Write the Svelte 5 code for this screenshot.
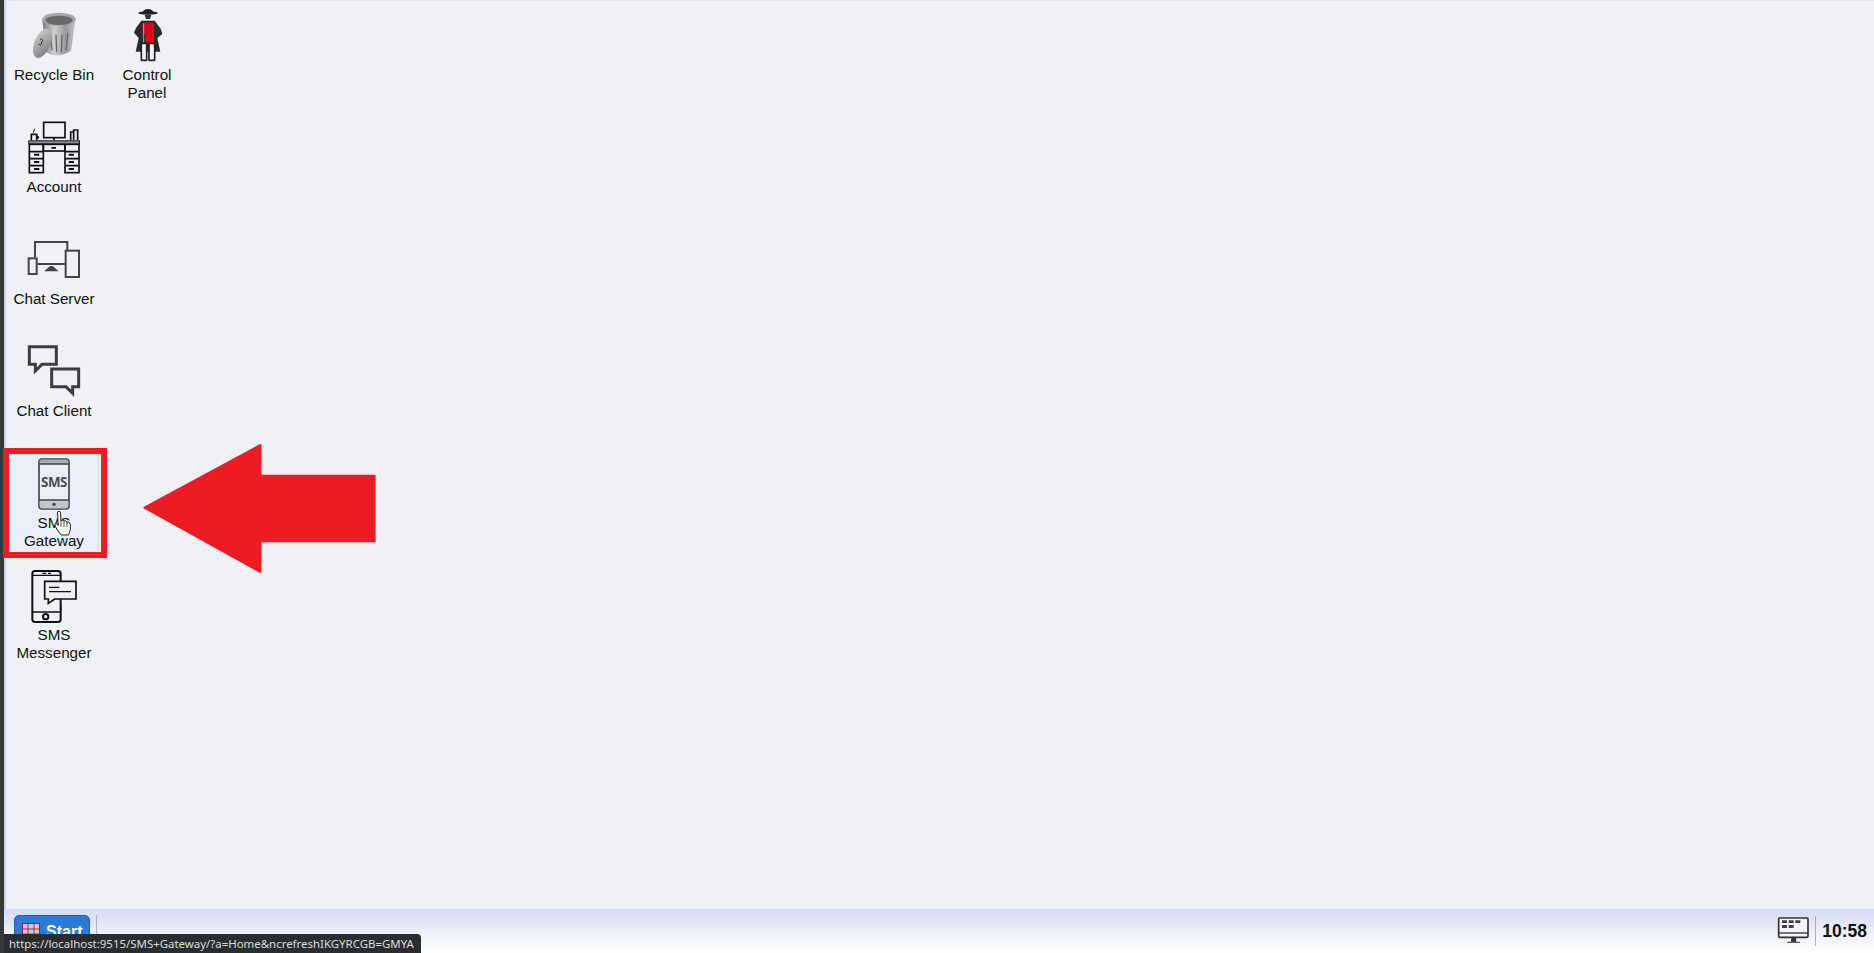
<script lang="ts">
	// Desktop shortcuts, in column order; col 2 holds only Control Panel
	const leftIcons = [
		{ id: 'recycle', label: 'Recycle Bin', box: '81 30 162 162' },
		{ id: 'control', label: 'Control Panel', box: '360 30 162 162' },
		{ id: 'account', label: 'Account', box: '81 366 162 162' },
		{ id: 'server', label: 'Chat Server', box: '81 42 162 162' },
		{ id: 'client', label: 'Chat Client', box: '81 378 162 162' },
		{ id: 'gateway', label: 'SMS Gateway', box: '81 54 162 162', active: true },
		{ id: 'messenger', label: 'SMS Messenger', box: '81 390 162 162' }
	];
	const statusUrl = 'https://localhost:9515/SMS+Gateway/?a=Home&ncrefreshIKGYRCGB=GMYA';
</script>

<div class="screen">
	<main class="desktop">
		{#each leftIcons as item}
			<button class="tile {item.id}" class:active={item.active} type="button">
				<svg class="tile__icon" viewBox={item.box} aria-hidden="true">
					{#if item.id === 'recycle'}
						<defs>
							<linearGradient id="can" x1="0" x2="1" y1="0" y2="0">
								<stop offset="0" stop-color="#777" />
								<stop offset="0.35" stop-color="#cfcfcf" />
								<stop offset="0.7" stop-color="#999" />
								<stop offset="1" stop-color="#c8c8c8" />
							</linearGradient>
							<linearGradient id="lid" x1="0" x2="1" y1="0" y2="1">
								<stop offset="0" stop-color="#d2d2d2" />
								<stop offset="1" stop-color="#777" />
							</linearGradient>
						</defs>
						<path d="M127 60 Q176 30 227 56 L213 152 Q172 178 138 156 Z" fill="url(#can)" />
						<ellipse cx="177" cy="58" rx="50" ry="20" fill="#a8a8a8" />
						<ellipse cx="177" cy="61" rx="41" ry="14" fill="#6a6a6a" />
						<path d="M150 100 L156 150 M168 104 L170 156 M186 104 L184 156 M204 98 L198 150" stroke="#666" stroke-width="4" fill="none" />
						<ellipse cx="127" cy="130" rx="24" ry="46" transform="rotate(22 127 130)" fill="url(#lid)" />
						<path d="M120 116 L128 120 L122 136 L116 132" stroke="#333" stroke-width="3" fill="none" />
					{:else if item.id === 'control'}
						<ellipse cx="444" cy="39" rx="29" ry="5" fill="#222" />
						<path d="M428 38 Q430 27 444 27 Q458 27 460 38 Z" fill="#222" />
						<path d="M434 44 H454 L450 57 H438 Z" fill="#333" />
						<path d="M424 62 H464 L482 86 L487 102 L472 114 L481 155 H407 L416 114 L402 98 L408 84 Z" fill="#2b2b2b" />
						<path d="M428 68 H462 V128 H436 V102 H428 Z" fill="#e2001a" />
						<path d="M431 70 V128" stroke="#dfe3ea" stroke-width="2" />
						<path d="M424 130 H440 V181 H424 Z M447 130 H464 V181 H447 Z" fill="#f3f4f7" stroke="#222" stroke-width="5" stroke-linejoin="round" />
					{:else if item.id === 'account'}
						<g fill="none" stroke="#111" stroke-width="5">
							<rect x="131" y="367" width="64" height="46" />
							<path d="M162 413 V421 M94 420 V403 H110 V420 M110 407 Q120 412 110 417 M212 420 V396 H221 V420 M221 420 V390 H233 V420" />
							<path d="M100 398 L104 386" stroke-width="3" />
							<rect x="88" y="433" width="42" height="85" />
							<rect x="195" y="433" width="42" height="85" />
							<rect x="130" y="433" width="65" height="20" />
							<path d="M88 455 H130 M88 476 H130 M88 497 H130 M195 455 H237 M195 476 H237 M195 497 H237" />
						</g>
						<rect x="86.5" y="422.5" width="152" height="9" fill="#8f9094" stroke="#111" stroke-width="3" />
						<path d="M102 461 h16 v6 h-16 Z M102 483 h16 v6 h-16 Z M102 504 h16 v6 h-16 Z M206 461 h16 v6 h-16 Z M206 483 h16 v6 h-16 Z M206 504 h16 v6 h-16 Z M154 441 h14 v5 h-14 Z" fill="#111" />
					{:else if item.id === 'server'}
						<g fill="none" stroke="#444" stroke-width="6">
							<path d="M105 112 V66 H202 V92 M112 132 H196" />
							<rect x="197" y="92" width="40" height="79" />
							<rect x="86" y="115" width="24" height="47" />
						</g>
						<path d="M150 138 H158 L176 154 H132 Z" fill="#444" />
					{:else if item.id === 'client'}
						<g fill="none" stroke="#3d3d3d" stroke-width="9">
							<path d="M88 380 H169 V433 H126 L106 453 V433 H88 Z" />
							<path d="M236 447 H155 V500 H198 L218 520 V500 H236 Z" />
						</g>
					{:else if item.id === 'gateway'}
						<rect x="117" y="57" width="90" height="150" rx="9" fill="#e9edf8" stroke="#444" stroke-width="5" />
						<path d="M119 60 Q119 59 126 59 H198 Q205 59 205 66 V72 H119 Z" fill="#a9acb3" />
						<path d="M119 180 H205 V198 Q205 205 198 205 H126 Q119 205 119 198 Z" fill="#c3c6cc" />
						<path d="M117 72 H207 M117 180 H207" stroke="#444" stroke-width="4" />
						<circle cx="162" cy="193" r="5" fill="#444" />
						<text class="phone-text" x="162" y="142" text-anchor="middle">SMS</text>
					{:else if item.id === 'messenger'}
						<g fill="none" stroke="#111" stroke-width="6">
							<path d="M182 424 V401 Q182 393 174 393 H105 Q97 393 97 401 V538 Q97 546 105 546 H174 Q182 546 182 538 V478" />
							<path d="M97 406 H182 M97 516 H182 M182 491 V516" stroke-width="4" />
							<circle cx="137" cy="530" r="8" />
							<path d="M134 424 H228 V477 H164 L145 490 V477 H134 Z" fill="#eff1f5" stroke-width="5" />
						</g>
						<path d="M127 400 h12 M144 400 h9" stroke="#111" stroke-width="4" />
						<path d="M147 442 H178 M147 455 H213" stroke="#111" stroke-width="4" />
					{/if}
				</svg>
				<span class="tile__label">{item.label}</span>
			</button>
		{/each}
	</main>

	<footer class="taskbar">
		<button class="start" type="button">
			<svg class="start__icon" viewBox="0 0 18 18" aria-hidden="true">
				<rect x="0.5" y="0.5" width="17" height="17" fill="#c9ccd2" stroke="#b3122c" />
				<path d="M0 6 H18 M0 11 H18 M6 0 V18 M12 0 V18" stroke="#8b3a4a" stroke-width="1" />
			</svg>
			Start
		</button>
		<span class="divider"></span>
		<div class="tray">
			<svg class="tray__screen" viewBox="115 70 96 96" aria-hidden="true">
				<rect x="120" y="79" width="88" height="58" rx="3" fill="#f4f5fa" stroke="#333" stroke-width="5" />
				<path d="M120 124 H208" stroke="#333" stroke-width="4" />
				<path d="M130 86 h15 v8 h-15 Z M150 86 h15 v8 h-15 Z M170 86 h15 v8 h-15 Z M130 100 h15 v9 h-15 Z M150 100 h15 v9 h-15 Z" fill="#444" />
				<path d="M160 137 H170 L172 149 H158 Z M146 152 H184" fill="#333" stroke="#333" stroke-width="3" />
			</svg>
			<span class="divider"></span>
			<time class="clock">10:58</time>
		</div>
	</footer>

	<!-- Tutorial annotation drawn over the desktop -->
	<div class="callout"></div>
	<svg class="arrow" viewBox="0 0 236 132" aria-hidden="true">
		<polygon points="1,64 118,1 118,32 233,32 233,98 118,98 118,129" fill="#ed1c24" stroke="#ed1c24" stroke-width="2" stroke-linejoin="round" />
	</svg>
	<svg class="cursor" viewBox="0 0 18 26" aria-hidden="true">
		<path d="M3.5 2 Q5.2 0.4 6.5 2 L7 11 Q8.6 9.4 10 11 Q12 9.8 13 12 Q15.5 11.5 16.5 14.5 Q17 20 14.5 25 H7 Q5 22 3 19.5 L0.8 15 Q1 12.8 3.2 14 L4.2 15.5 Z" fill="#fff" stroke="#222" stroke-width="1" />
		<path d="M7 11 V17 M10 11 V17 M13 12 V17" stroke="#222" stroke-width="0.8" />
	</svg>
	<div class="status-url">{statusUrl}</div>
</div>

<style>
	:global(body) {
		margin: 0;
		overflow: hidden;
	}

	.screen {
		position: relative;
		display: flex;
		flex-direction: column;
		height: 953px;
		background: #eff1f5;
		border-left: 4px solid #35393c;
		box-sizing: border-box;
		font-family: 'Liberation Sans', Arial, sans-serif;
		color: #111;
	}

	.desktop {
		flex: 1;
		display: grid;
		grid-template-columns: 90px 90px;
		grid-auto-rows: 99px;
		column-gap: 3px;
		row-gap: 13px;
		align-content: start;
		padding: 6px 0 0 3px;
		border-left: 2px solid #cfd0e8;
		border-top: 1px solid #e4e5ea;
	}

	.tile {
		display: flex;
		flex-direction: column;
		align-items: center;
		box-sizing: border-box;
		padding: 3px 0 0;
		margin: -1px 0 0;
		background: none;
		border: 1px solid transparent;
		font: inherit;
		color: inherit;
		grid-column: 1;
	}

	.tile.control {
		grid-column: 2;
		grid-row: 1;
	}

	.tile.active {
		background: #e9eefa;
		border-color: #d6daf0;
	}

	.tile__icon {
		width: 54px;
		height: 54px;
		margin-bottom: 2px;
		overflow: visible;
		flex: none;
	}

	.tile__label {
		font-size: 15.2px;
		line-height: 18px;
		text-align: center;
		width: 84px;
	}

	.phone-text {
		font-family: 'Noto Sans', 'Liberation Sans', sans-serif;
		font-weight: 700;
		font-size: 40px;
		letter-spacing: -1.5px;
		fill: #4a4d52;
	}

	.taskbar {
		display: flex;
		align-items: flex-start;
		gap: 6px;
		height: 44px;
		padding: 6px 0 0 10px;
		box-sizing: border-box;
		background: linear-gradient(180deg, #d6daf6 0%, #eceefa 50%, #fff 100%);
	}

	.start {
		display: flex;
		align-items: center;
		gap: 6px;
		width: 76px;
		height: 34px;
		padding: 0 0 0 7px;
		box-sizing: border-box;
		border: 1px solid #1c5fb0;
		border-radius: 5px;
		background: #2b7ad6;
		color: #fff;
		font: 700 16px 'Liberation Sans', Arial, sans-serif;
	}

	.start__icon {
		width: 18px;
		height: 18px;
		flex: none;
	}

	.divider {
		width: 1px;
		height: 30px;
		background: #aeb0b8;
		flex: none;
	}

	.tray {
		margin-left: auto;
		display: flex;
		align-items: center;
		gap: 6px;
		height: 32px;
		padding-right: 7px;
	}

	.tray__screen {
		width: 32px;
		height: 32px;
	}

	.clock {
		font-size: 17.5px;
		font-weight: 700;
		color: #111;
	}

	.callout {
		position: absolute;
		left: -1px;
		top: 448px;
		width: 104px;
		height: 110px;
		box-sizing: border-box;
		border: 6px solid #ed1c24;
	}

	.arrow {
		position: absolute;
		left: 139px;
		top: 444px;
		width: 235px;
		height: 131px;
	}

	.cursor {
		position: absolute;
		left: 50px;
		top: 510px;
		width: 18px;
		height: 26px;
	}

	.status-url {
		position: absolute;
		left: 0;
		bottom: 0;
		height: 19px;
		padding: 0 7px 0 5px;
		border-top-right-radius: 4px;
		background: #2a2d30;
		color: #dcdcdc;
		font: 11.45px/20px 'Noto Sans', 'Open Sans', sans-serif;
		white-space: nowrap;
	}
</style>
